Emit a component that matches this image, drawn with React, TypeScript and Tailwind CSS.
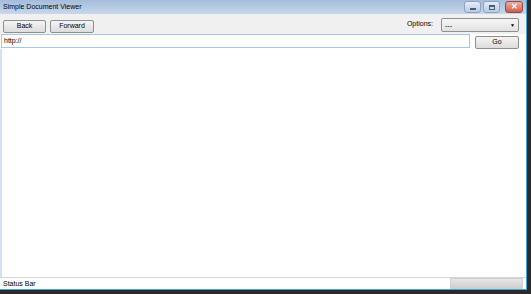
import React from "react";

const font = { fontFamily: '"Liberation Sans", Arial, sans-serif' };

function WinBtn({ w, children, red }: { w: string; children: React.ReactNode; red?: boolean }) {
  return (
    <div
      className={`${w} h-[12px] rounded-[3px] border flex items-center justify-center ${
        red
          ? "border-[#9a4a44] bg-gradient-to-b from-[#eab0a4] to-[#d05a4c]"
          : "border-[#8da2c0] bg-gradient-to-b from-[#e6edf7] to-[#b9cbe2]"
      }`}
    >
      {children}
    </div>
  );
}

function Btn({ w, label }: { w: string; label: string }) {
  return (
    <div
      className={`${w} h-[13px] rounded-[2px] border border-[#8e8f8f] bg-gradient-to-b from-[#f4f4f4] to-[#dcdcdc] flex items-center justify-center text-[7px] text-[#000]`}
    >
      {label}
    </div>
  );
}

export default function App() {
  return (
    <div className="w-[531px] h-[294px] bg-[#2a2a2a] overflow-hidden" style={font}>
      <div className="w-[527px] h-[290px] flex flex-col border-r border-b border-[#3fa7d6] bg-white">
        {/* Title bar */}
        <div className="h-[14px] flex items-start bg-gradient-to-b from-[#a4bcdb] to-[#c8d8eb] pl-[3px] pr-[3px]">
          <div className="pt-[2px] text-[7px] leading-[9px] text-[#000] flex-1">Simple Document Viewer</div>
          <div className="flex gap-[2px] pt-[1px]">
            <WinBtn w="w-[17px]">
              <div className="w-[6px] h-[2px] bg-[#4a5d78] mt-[3px]" />
            </WinBtn>
            <WinBtn w="w-[17px]">
              <div className="w-[6px] h-[5px] border border-[#4a5d78] border-t-2" />
            </WinBtn>
            <div className="w-[1px]" />
            <WinBtn w="w-[18px]" red>
              <span className="text-[8px] leading-none font-bold text-white">✕</span>
            </WinBtn>
          </div>
        </div>
        {/* Toolbar */}
        <div className="h-[20px] bg-[#f0f0f0] flex items-start pl-[3px] pr-[7px]">
          <div className="flex gap-[4px] pt-[6px]">
            <Btn w="w-[43px]" label="Back" />
            <Btn w="w-[44px]" label="Forward" />
          </div>
          <div className="flex-1" />
          <div className="pt-[5px] text-[7px] text-[#000] mr-[8px]">Options:</div>
          <div className="mt-[4px] w-[78px] h-[14px] rounded-[2px] border border-[#8e8f8f] bg-gradient-to-b from-[#f6f6f6] to-[#e2e2e2] flex items-center px-[3px] text-[7px] text-[#000]">
            <span className="flex-1 leading-none">---</span>
            <span className="text-[5px] leading-none">▼</span>
          </div>
        </div>
        {/* URL row */}
        <div className="h-[15px] flex items-start pl-[1px] pr-[7px]">
          <div className="w-[469px] h-[14px] border border-[#a9c6e6] bg-white flex items-center pl-[2px] text-[7px] text-[#000]">
            http://
          </div>
          <div className="flex-1" />
          <div className="mt-[2px]">
            <Btn w="w-[44px]" label="Go" />
          </div>
        </div>
        {/* Content */}
        <div className="flex-1 border-l-2 border-[#d3e2f2] bg-white" />
        {/* Status bar */}
        <div className="h-[12px] border-t border-[#d6d6d6] flex items-stretch pl-[3px] pr-[3px] bg-white">
          <div className="flex-1 text-[7px] leading-[11px] text-[#000]">Status Bar</div>
          <div className="w-[73px] border border-[#cfcfcf] bg-gradient-to-b from-[#e6e6e6] to-[#cfcfcf]" />
        </div>
      </div>
    </div>
  );
}
